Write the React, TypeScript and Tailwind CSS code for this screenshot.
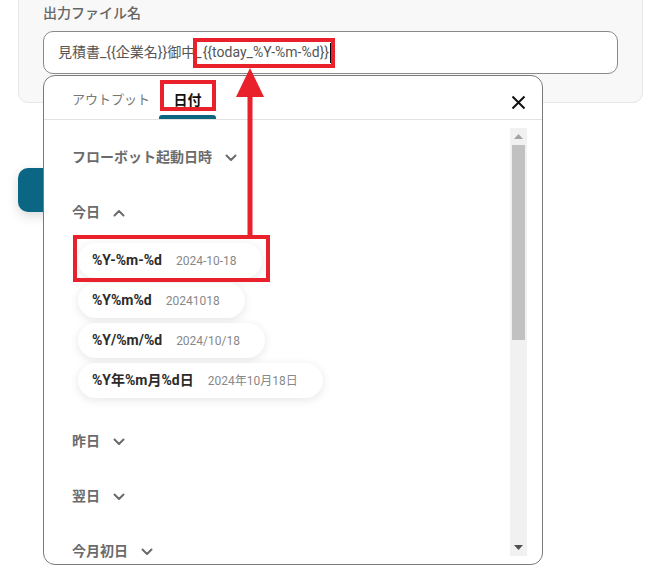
import React from "react";

const Chevron = ({ up = false }: { up?: boolean }) => (
  <svg width="12" height="8" viewBox="0 0 12 8" className="ml-[13px]" fill="none">
    <path
      d={up ? "M1.5 6.5 L6 2 L10.5 6.5" : "M1.5 1.5 L6 6 L10.5 1.5"}
      stroke="#6b6b6b"
      strokeWidth="2"
      strokeLinecap="round"
      strokeLinejoin="round"
    />
  </svg>
);

const Header = ({ label, up = false }: { label: string; up?: boolean }) => (
  <div className="flex h-[55px] items-center pl-[28px] text-[14px] font-semibold text-[#6b6b6b]">
    <span>{label}</span>
    <Chevron up={up} />
  </div>
);

const Chip = ({ fmt, sample }: { fmt: string; sample: string }) => (
  <div className="flex h-[35px] w-fit items-center gap-[14px] rounded-full bg-white pl-[14px] pr-[25px] shadow-[0_2px_10px_rgba(0,0,0,0.10)]">
    <span className="text-[14px] font-bold text-[#2b2b2b]">{fmt}</span>
    <span className="text-[12px] text-[#888888]">{sample}</span>
  </div>
);

export default function App() {
  return (
    <div
      className="relative h-[565px] w-[663px] overflow-hidden bg-white"
      style={{ fontFamily: 'Roboto, "Noto Sans CJK JP", sans-serif' }}
    >
      {/* Card */}
      <div className="-mt-[20px] ml-[18px] w-[625px] rounded-[10px] border border-[#e6e6e6] bg-[#f8f8f8] px-[24px] pb-[28px] pt-[22px]">
        <div className="h-[20px] text-[14px] font-medium leading-[20px] text-[#666666]">出力ファイル名</div>
        <div className="mt-[8px] flex h-[43px] w-[575px] items-center rounded-[10px] border border-[#8a8a8a] bg-white pl-[14px] text-[14px] text-[#555555]">
          <span>見積書_{"{{"}企業名{"}}"}御中_</span>
          <span className="ml-[1px]">{"{{"}today_%Y-%m-%d{"}}"}</span>
          <span className="ml-[1px] h-[20px] w-[1px] bg-black" />
        </div>
      </div>

      {/* Teal button behind */}
      <div className="ml-[18px] mt-[65px] h-[44px] w-[140px] rounded-[10px] bg-[#0a6682] shadow-[0_4px_12px_rgba(0,0,0,0.15)]" />

      {/* Popup */}
      <div className="absolute left-[43px] top-[75px] h-[490px] w-[500px] overflow-hidden rounded-[12px] border border-[#7a7a7a] bg-white">
        <div className="relative flex h-[44px] items-start border-b border-[#e2e2e2]">
          <div className="w-[115px] pl-[28px] pt-[14px] text-[13px] leading-[20px] text-[#777777]">アウトプット</div>
          <div className="relative flex h-full w-[57px] justify-center pt-[14px] text-[14px] font-bold leading-[20px] text-[#111111]">
            日付
            <span className="absolute bottom-0 left-0 h-[4px] w-full rounded-t-[3px] bg-[#0d6680]" />
          </div>
          <svg className="absolute right-[16px] top-[19px]" width="15" height="15" viewBox="0 0 15 15">
            <path d="M1.5 1.5 L13.5 13.5 M13.5 1.5 L1.5 13.5" stroke="#111" strokeWidth="2" />
          </svg>
        </div>

        <div className="relative h-[445px]">
          {/* Scrollbar */}
          <div className="absolute right-[15px] top-[8px] flex h-[428px] w-[17px] flex-col items-center bg-[#f1f1f1]">
            <svg className="mt-[6px]" width="9" height="5" viewBox="0 0 9 5">
              <path d="M0 5 L4.5 0 L9 5 Z" fill="#a3a3a3" />
            </svg>
            <div className="mt-[6px] h-[195px] w-[13px] bg-[#c1c1c1]" />
            <div className="flex-1" />
            <svg className="mb-[6px]" width="9" height="5" viewBox="0 0 9 5">
              <path d="M0 0 L4.5 5 L9 0 Z" fill="#505050" />
            </svg>
          </div>

          <div className="pt-[10px]">
            <Header label="フローボット起動日時" />
            <Header label="今日" up />
            <div className="mt-[3px] flex flex-col gap-[5px] pl-[34px]">
              <Chip fmt="%Y-%m-%d" sample="2024-10-18" />
              <Chip fmt="%Y%m%d" sample="20241018" />
              <Chip fmt="%Y/%m/%d" sample="2024/10/18" />
              <Chip fmt="%Y年%m月%d日" sample="2024年10月18日" />
            </div>
            <div className="mt-[16px]">
              <Header label="昨日" />
              <Header label="翌日" />
              <Header label="今月初日" />
            </div>
          </div>
        </div>
      </div>

      {/* Red annotations */}
      <div className="pointer-events-none absolute left-[193px] top-[38px] h-[30px] w-[142px] border-[4px] border-[#e8212b]" />
      <div className="pointer-events-none absolute left-[160px] top-[80px] h-[31px] w-[56px] border-[4px] border-[#e8212b]" />
      <div className="pointer-events-none absolute left-[73px] top-[235px] h-[47px] w-[197px] border-[4px] border-[#e8212b]" />
      <svg className="pointer-events-none absolute left-[235px] top-[67px]" width="30" height="170" viewBox="0 0 30 170">
        <path d="M15 1 L29 30 L1 30 Z" fill="#e8212b" />
        <rect x="12.5" y="29" width="5" height="141" fill="#e8212b" />
      </svg>
    </div>
  );
}
